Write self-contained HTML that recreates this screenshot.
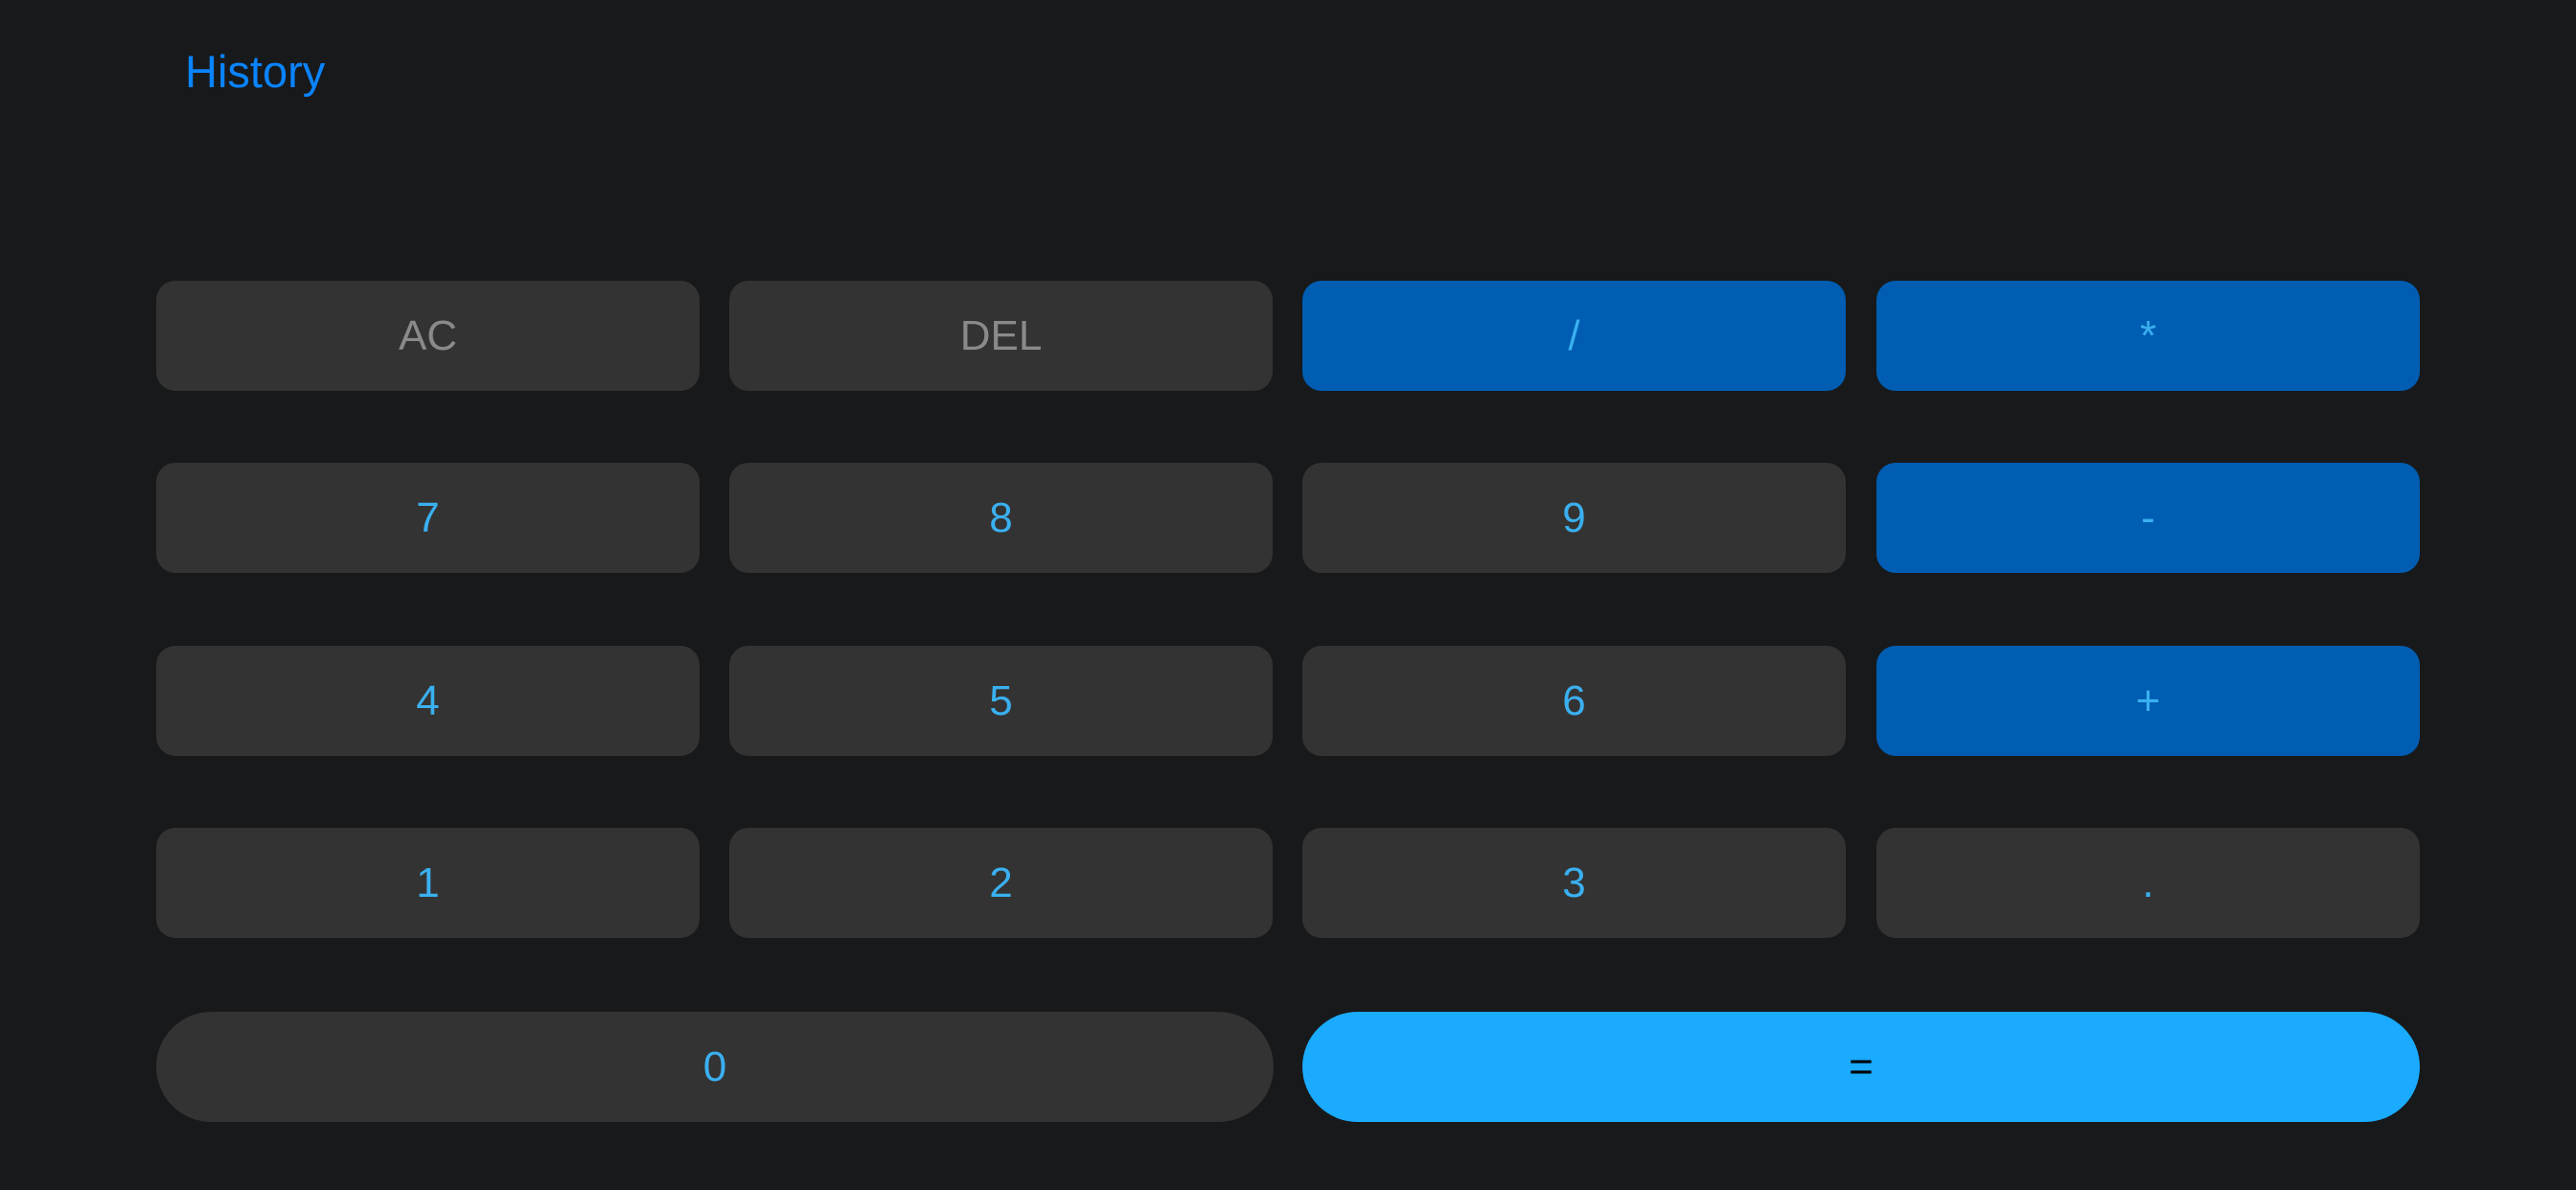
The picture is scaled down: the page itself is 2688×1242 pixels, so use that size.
<!DOCTYPE html>
<html><head><meta charset="utf-8"><style>
html,body{margin:0;padding:0;background:#18191b;width:2688px;height:1242px;overflow:hidden;font-family:"Liberation Sans",sans-serif}
.h{position:absolute;left:193px;top:47px;font-size:47px;color:#0a84ff}
.b{position:absolute;width:567px;height:115px;border-radius:20px;background:#333333;color:#3ab0f0;font-size:44px;display:flex;align-items:center;justify-content:center}
.o{background:#005db2}
.g{color:#8a8a8a}
.p{border-radius:58px;width:1166px}
.e{background:#1aabff;color:#000}
</style></head><body>
<div class="h">History</div>
<div class="b g" style="left:163px;top:293px">AC</div>
<div class="b g" style="left:761px;top:293px">DEL</div>
<div class="b o" style="left:1359px;top:293px">/</div>
<div class="b o" style="left:1958px;top:293px">*</div>
<div class="b" style="left:163px;top:483px">7</div>
<div class="b" style="left:761px;top:483px">8</div>
<div class="b" style="left:1359px;top:483px">9</div>
<div class="b o" style="left:1958px;top:483px">-</div>
<div class="b" style="left:163px;top:674px">4</div>
<div class="b" style="left:761px;top:674px">5</div>
<div class="b" style="left:1359px;top:674px">6</div>
<div class="b o" style="left:1958px;top:674px">+</div>
<div class="b" style="left:163px;top:864px">1</div>
<div class="b" style="left:761px;top:864px">2</div>
<div class="b" style="left:1359px;top:864px">3</div>
<div class="b" style="left:1958px;top:864px">.</div>
<div class="b p" style="left:163px;top:1056px">0</div>
<div class="b p e" style="left:1359px;top:1056px">=</div>
</body></html>
